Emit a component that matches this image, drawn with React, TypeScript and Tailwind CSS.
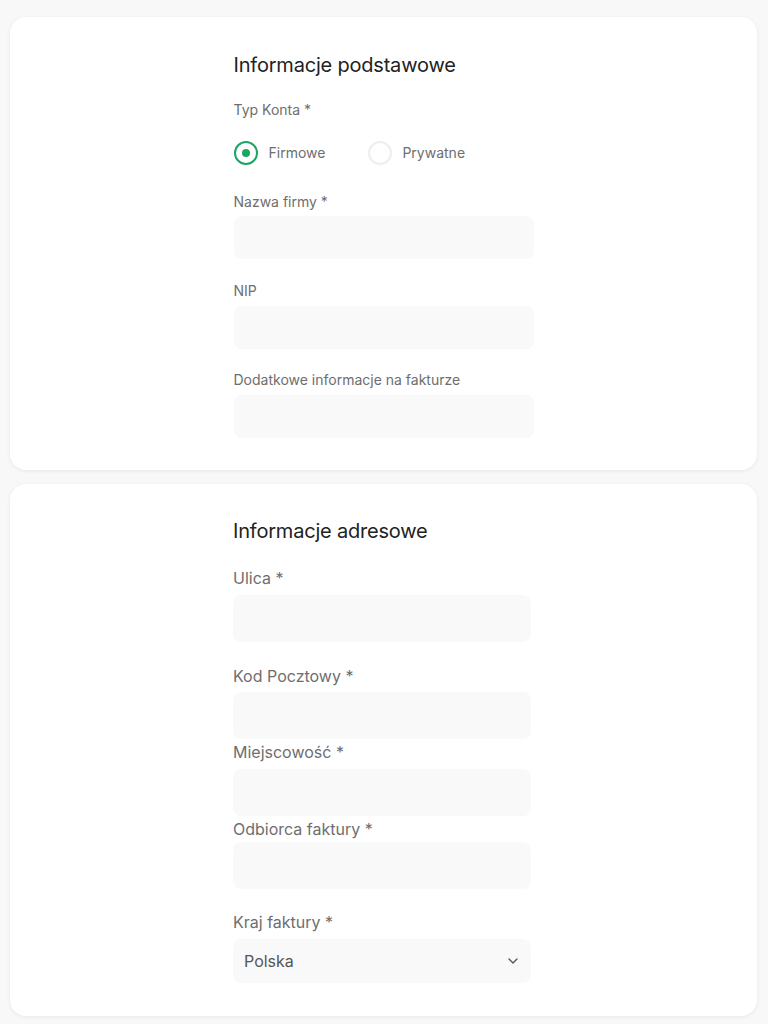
import { ChevronDown } from 'lucide-react'

function Label({ text, className }: { text: string; className: string }) {
    return <div className={className}>{text}</div>
}

function Input({ className }: { className: string }) {
    return <input type="text" className={"block w-full rounded-lg bg-[#f9f9f9] px-3 outline-none " + className} />
}

export default function App() {
    return (
        <div className="min-h-[1024px] bg-[#f8f8f8] pl-[10px] pr-[11px] pt-[17px] pb-[8px] font-['Inter',sans-serif]">
            {/* Informacje podstawowe */}
            <div className="rounded-2xl bg-white pt-[34px] pb-[32px] shadow-[0_1px_4px_rgba(0,0,0,0.07)]">
                <div className="mx-auto w-[300px]">
                    <h2 className="text-xl leading-7 tracking-[-0.01em] text-[#222]">Informacje podstawowe</h2>

                    <Label text="Typ Konta *" className="mt-[21px] text-sm leading-5 text-[#6e6e6e]" />
                    <div className="mt-[21px] flex items-center">
                        <span className="flex h-6 w-6 items-center justify-center rounded-full border-2 border-[#1fa463]">
                            <span className="h-2 w-2 rounded-full bg-[#1fa463]"></span>
                        </span>
                        <span className="ml-[11px] text-sm text-[#6e6e6e]">Firmowe</span>
                        <span className="ml-[43px] h-6 w-6 rounded-full border-2 border-[#eeeeee]"></span>
                        <span className="ml-[10px] text-sm text-[#6e6e6e]">Prywatne</span>
                    </div>

                    <Label text="Nazwa firmy *" className="mt-[27px] text-sm leading-5 text-[#6e6e6e]" />
                    <Input className="mt-[4px] h-[43px]" />

                    <Label text="NIP" className="mt-[22px] text-sm leading-5 text-[#6e6e6e]" />
                    <Input className="mt-[5px] h-[43px]" />

                    <Label text="Dodatkowe informacje na fakturze" className="mt-[21px] text-sm leading-5 text-[#6e6e6e]" />
                    <Input className="mt-[5px] h-[43px]" />
                </div>
            </div>

            {/* Informacje adresowe */}
            <div className="mt-[14px] rounded-2xl bg-white pt-[33px] pb-[33px] shadow-[0_1px_4px_rgba(0,0,0,0.07)]">
                <div className="ml-[223px] w-[298px]">
                    <h2 className="text-xl leading-7 tracking-[-0.01em] text-[#222]">Informacje adresowe</h2>

                    <Label text="Ulica *" className="mt-[21px] text-base leading-6 text-[#6e6e6e]" />
                    <Input className="mt-[5px] h-[47px]" />

                    <Label text="Kod Pocztowy *" className="mt-[22px] text-base leading-6 text-[#6e6e6e]" />
                    <Input className="mt-[4px] h-[47px]" />

                    <Label text="Miejscowość *" className="mt-[1px] text-base leading-6 text-[#6e6e6e]" />
                    <Input className="mt-[5px] h-[47px]" />

                    <Label text="Odbiorca faktury *" className="mt-[1px] text-base leading-6 text-[#6e6e6e]" />
                    <Input className="mt-[1px] h-[47px]" />

                    <Label text="Kraj faktury *" className="mt-[21px] text-base leading-6 text-[#6e6e6e]" />
                    <div className="mt-[5px] flex h-[44px] items-center justify-between rounded-lg bg-[#f9f9f9] pl-[11px] pr-[10px]">
                        <span className="text-base text-[#555]">Polska</span>
                        <ChevronDown size={16} strokeWidth={2} className="text-[#555]" />
                    </div>
                </div>
            </div>
        </div>
    )
}
